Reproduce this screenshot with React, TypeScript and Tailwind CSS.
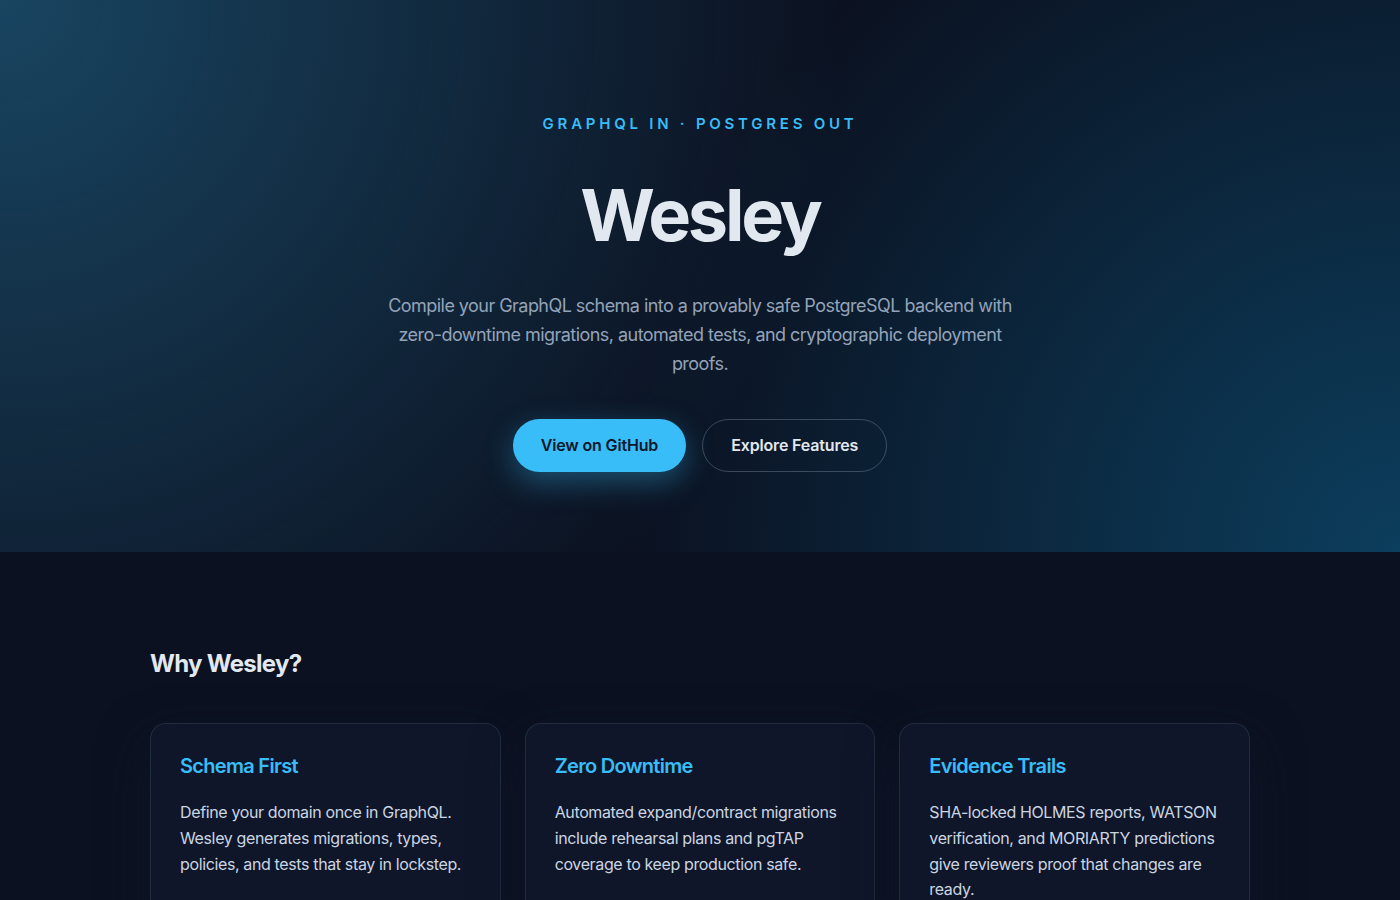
const features = [
  {
    title: "Schema First",
    body: "Define your domain once in GraphQL. Wesley generates migrations, types, policies, and tests that stay in lockstep.",
  },
  {
    title: "Zero Downtime",
    body: "Automated expand/contract migrations include rehearsal plans and pgTAP coverage to keep production safe.",
  },
  {
    title: "Evidence Trails",
    body: "SHA-locked HOLMES reports, WATSON verification, and MORIARTY predictions give reviewers proof that changes are ready.",
  },
];

export default function App() {
  return (
    <div className="min-h-screen bg-[#0b1120] font-['Inter','Liberation_Sans',sans-serif] text-[#e2e8f0] antialiased">
      {/* Hero */}
      <header className="bg-[#0b1120] bg-[image:radial-gradient(circle_at_0%_0%,rgba(56,189,248,0.3),transparent_56%),radial-gradient(circle_at_100%_100%,rgba(14,165,233,0.3),transparent_52%)] px-6 pt-[114px] pb-20 text-center">
        <p className="text-[15px] font-semibold leading-5 tracking-[0.25em] text-[#38bdf8] uppercase">
          GraphQL in · Postgres out
        </p>
        <h1 className="mt-[45px] text-[72px] font-bold leading-none tracking-[-0.045em] text-[#e2e8f0]">
          Wesley
        </h1>
        <p className="mx-auto mt-[41px] max-w-[640px] text-lg leading-[1.6] tracking-[-0.03em] text-[#94a3b8]">
          Compile your GraphQL schema into a provably safe PostgreSQL backend with zero-downtime
          migrations, automated tests, and cryptographic deployment proofs.
        </p>
        <div className="mt-[41px] flex items-center justify-center gap-4">
          <a
            href="#"
            className="rounded-full bg-[#38bdf8] px-7 py-[14px] font-semibold leading-[25px] tracking-[-0.01em] text-[#0f172a] shadow-[0_10px_30px_rgba(56,189,248,0.35)]"
          >
            View on GitHub
          </a>
          <a
            href="#features"
            className="rounded-full border border-[#94a3b8]/35 px-7 py-[13px] font-semibold leading-[25px] tracking-[-0.01em] text-[#e2e8f0]"
          >
            Explore Features
          </a>
        </div>
      </header>

      {/* Features */}
      <section id="features" className="mx-auto max-w-[1100px] pt-24 pb-24">
        <h2 className="text-2xl font-bold tracking-[-0.03em] text-[#e2e8f0]">Why Wesley?</h2>
        <div className="mt-[43px] grid grid-cols-3 gap-6">
          {features.map((f) => (
            <div
              key={f.title}
              className="rounded-2xl border border-[#334155]/50 bg-[#0f1629] px-[29px] py-7 shadow-[0_20px_50px_rgba(15,23,42,0.7)]"
            >
              <h3 className="text-xl font-semibold leading-7 tracking-[-0.035em] text-[#38bdf8]">
                {f.title}
              </h3>
              <p className="mt-5 leading-[1.6] tracking-[-0.023em] text-[#cbd5e1]">{f.body}</p>
            </div>
          ))}
        </div>
      </section>
    </div>
  );
}
